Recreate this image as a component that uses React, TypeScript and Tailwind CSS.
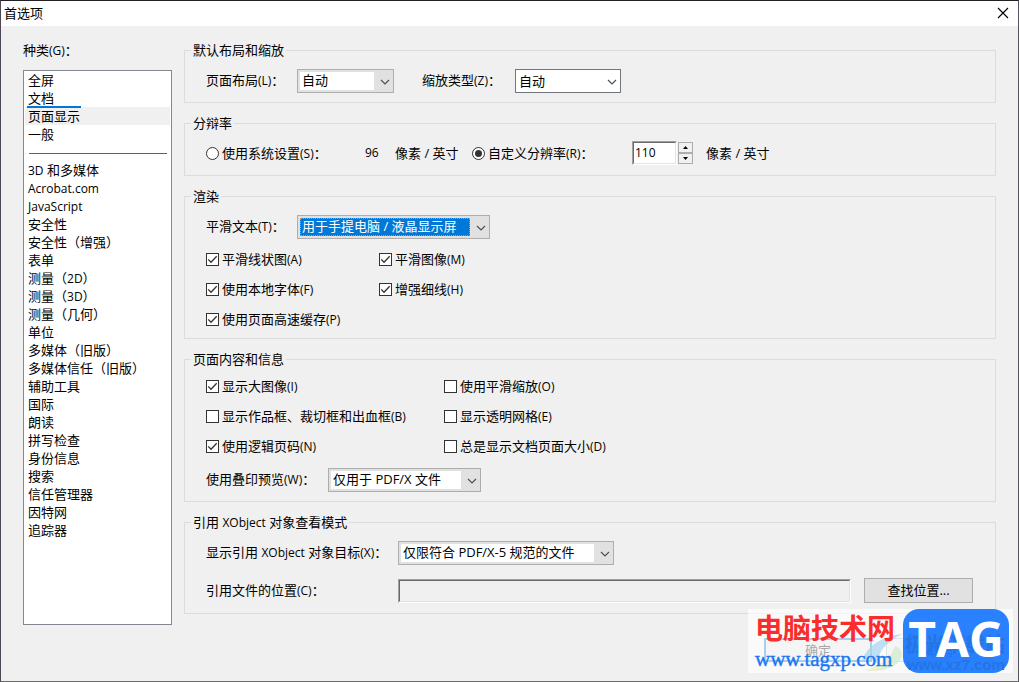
import { useState } from 'react';
import type { ReactNode } from 'react';

const categories = ['全屏', '文档', '页面显示', '一般'];

const moreCategories = [
  '3D 和多媒体',
  'Acrobat.com',
  'JavaScript',
  '安全性',
  '安全性（增强）',
  '表单',
  '测量（2D）',
  '测量（3D）',
  '测量（几何）',
  '单位',
  '多媒体（旧版）',
  '多媒体信任（旧版）',
  '辅助工具',
  '国际',
  '朗读',
  '拼写检查',
  '身份信息',
  '搜索',
  '信任管理器',
  '因特网',
  '追踪器',
];

// Latin runs are set one size smaller than the Chinese text around them
function Label({ text }: { text: string }) {
  return (
    <>
      {text.split(/([\x21-\x7e]+)/).map((part, i) =>
        i % 2 ? (
          <span key={i} className="text-[12px]">
            {part}
          </span>
        ) : (
          part
        )
      )}
    </>
  );
}

function Group({ title, className, children }: { title: string; className: string; children: ReactNode }) {
  return (
    <fieldset className={`min-w-0 border border-[#dcdcdc] pl-[21px] pr-[22px] ${className}`}>
      <legend className="-ml-[15px] h-[18px] px-[2px]">
        <Label text={title} />
      </legend>
      {children}
    </fieldset>
  );
}

function Chevron() {
  return (
    <svg
      className="pointer-events-none absolute right-[3px] top-[9px]"
      width="10"
      height="7"
      viewBox="0 0 10 7"
      fill="none"
      stroke="#505050"
      strokeWidth="1.2"
    >
      <path d="M1 1l4 4 4-4" />
    </svg>
  );
}

function Combo({ id, value, className, selected }: { id: string; value: string; className: string; selected?: boolean }) {
  return (
    <div className={`relative h-6 shrink-0 border border-[#adadad] bg-[#e1e1e1] p-[2px] ${className}`}>
      <select
        id={id}
        className={`block h-[18px] w-full appearance-none rounded-none border-0 border-r-[17px] border-[#e1e1e1] pb-[2px] pl-[2px] leading-[16px] outline-none ${
          selected ? 'bg-[#0078d7] text-white' : 'bg-white'
        }`}
      >
        <option>{value}</option>
      </select>
      {selected && (
        <span className="pointer-events-none absolute bottom-[2px] left-[2px] right-[19px] top-[2px] border border-dotted border-[#ff8728]" />
      )}
      <Chevron />
    </div>
  );
}

function Check({ text, defaultChecked }: { text: string; defaultChecked?: boolean }) {
  return (
    <label className="flex h-[30px] items-center gap-[3px]">
      <span className="grid h-[13px] w-[13px] shrink-0">
        <input
          type="checkbox"
          defaultChecked={defaultChecked}
          className="peer col-start-1 row-start-1 h-[13px] w-[13px] appearance-none border border-[#333333] bg-white"
        />
        <svg
          className="pointer-events-none invisible col-start-1 row-start-1 peer-checked:visible"
          width="13"
          height="13"
          viewBox="0 0 13 13"
          fill="none"
          stroke="#333333"
          strokeWidth="1.3"
        >
          <path d="M2.2 6.4l2.8 2.8 5.7-5.9" />
        </svg>
      </span>
      <span>
        <Label text={text} />
      </span>
    </label>
  );
}

function Radio({ text, checked, onChange, className }: { text: string; checked: boolean; onChange: () => void; className: string }) {
  return (
    <label className={`flex shrink-0 items-center gap-[3px] ${className}`}>
      <span className="grid h-[13px] w-[13px] shrink-0 place-items-center">
        <input
          type="radio"
          name="resolution"
          checked={checked}
          onChange={onChange}
          className="peer col-start-1 row-start-1 h-[13px] w-[13px] appearance-none rounded-full border border-[#333333] bg-white"
        />
        <span className="pointer-events-none invisible col-start-1 row-start-1 h-[7px] w-[7px] rounded-full bg-[#333333] peer-checked:visible" />
      </span>
      <span>
        <Label text={text} />
      </span>
    </label>
  );
}

function Watermark() {
  return (
    <div className="pointer-events-none absolute bottom-[8px] right-[5px] flex h-16 w-[265px] bg-white/65">
      <svg className="absolute left-[112px] top-[24px]" width="50" height="40" viewBox="0 0 50 40">
        <path d="M2 27C8 12 22 3 43 1C29 7 20 15 17 30C11 25 7 25 2 27Z" fill="#a5d4ee" opacity="0.7" />
        <path d="M17 32C26 29 32 22 35 13C46 16 43 31 29 35C22 38 12 39 6 37C10 36 14 35 17 32Z" fill="#cfeacb" opacity="0.7" />
        <path d="M6 37C15 36 24 31 30 24C27 34 18 39 6 37Z" fill="#f2f2c4" />
      </svg>
      <div className="relative flex flex-col pl-[7px]">
        <span className="whitespace-nowrap font-['Noto_Sans_CJK_SC',sans-serif] text-[28px] font-bold leading-[36px] text-[#fb2c2c]">
          电脑技术网
        </span>
        <span className="font-['Liberation_Serif',serif] text-[21px] leading-[28px] text-[#1b76f2] [-webkit-text-stroke:0.4px_#1b76f2]">
          www.tagxp.com
        </span>
      </div>
      <div className="absolute right-[4px] top-0 h-16 w-[106px] rounded-[16px] bg-[#056bff]/85">
        <span className="absolute left-[2px] top-[24px] whitespace-nowrap text-[20px] font-bold leading-[24px] text-[#2474e3]">
          极光下载站
        </span>
        <span className="absolute left-[4px] top-[48px] font-['Liberation_Sans',sans-serif] text-[15px] font-bold leading-[16px] text-[#2474e3]">
          www.xz7.com
        </span>
        <span className="absolute inset-0 text-center font-['Liberation_Sans_Narrow','Open_Sans',sans-serif] text-[48px] font-bold leading-[60px] text-white">
          TAG
        </span>
      </div>
    </div>
  );
}

export default function App() {
  const [current, setCurrent] = useState('页面显示');
  const [custom, setCustom] = useState(true);
  const [dpi, setDpi] = useState(110);

  const renderItem = (name: string) => (
    <li key={name} role="option" aria-selected={current === name} className="relative h-[18px]">
      <button
        type="button"
        onClick={() => setCurrent(name)}
        className={`block h-[18px] w-full whitespace-nowrap pl-[3px] text-left leading-[17px] ${
          current === name ? 'bg-[#f0f0f0]' : ''
        }`}
      >
        <Label text={name} />
      </button>
      {name === '文档' && <span className="absolute -bottom-px left-[2px] z-10 h-[2px] w-[54px] bg-[#0078d7]" />}
    </li>
  );

  return (
    <div className="relative flex min-h-screen flex-col border border-b-[#6b6b6b] border-l-[#4d4653] border-r-[#55555f] border-t-[#222026] bg-[#f0f0f0] font-['Open_Sans','Noto_Sans_CJK_SC',sans-serif] text-[13px] leading-[18px] text-black">
      <header className="flex h-[25px] items-center justify-between bg-white pb-[2px] pl-[3px] pr-[9px]">
        <h1>首选项</h1>
        <button type="button" aria-label="关闭">
          <svg width="12" height="12" viewBox="0 0 12 12" stroke="#000" strokeWidth="1.1">
            <path d="M1 1l10 10M11 1L1 11" />
          </svg>
        </button>
      </header>

      <main className="flex gap-3 pl-[22px] pr-[22px] pt-[15px]">
        <div className="w-[149px] shrink-0">
          <div id="kinds">
            <Label text="种类(G)：" />
          </div>
          <ul
            role="listbox"
            aria-labelledby="kinds"
            className="mt-[10px] h-[555px] border border-[#828790] bg-white px-px"
          >
            {categories.map(renderItem)}
            <li role="separator" className="flex h-[18px] items-center pl-1 pr-[3px] pt-[2px]">
              <span className="h-px w-full bg-[#0078d7]" />
            </li>
            {moreCategories.map(renderItem)}
          </ul>
        </div>

        <form className="flex min-w-0 flex-1 flex-col gap-[11px]" onSubmit={(e) => e.preventDefault()}>
          <Group title="默认布局和缩放" className="pb-[9px] pt-[10px]">
            <div className="flex items-center">
              <label htmlFor="layout" className="w-[91px] pb-[2px]">
                <Label text="页面布局(L)：" />
              </label>
              <Combo id="layout" value="自动" className="w-[97px]" />
              <label htmlFor="zoom" className="ml-7 w-[93px] pb-[2px]">
                <Label text="缩放类型(Z)：" />
              </label>
              <div className="relative h-6 w-[106px] border border-[#707679] bg-white">
                <select id="zoom" className="block h-[22px] w-full appearance-none pl-[3px] leading-[22px] outline-none">
                  <option>自动</option>
                </select>
                <Chevron />
              </div>
            </div>
          </Group>

          <Group title="分辩率" className="pb-[10px] pt-[9px]">
            <div className="flex h-6 items-center">
              <Radio
                text="使用系统设置(S)："
                checked={!custom}
                onChange={() => setCustom(false)}
                className="w-[159px]"
              />
              <span className="w-[30px] text-[12px]">96</span>
              <span className="w-[77px]">像素 / 英寸</span>
              <Radio
                text="自定义分辨率(R)："
                checked={custom}
                onChange={() => setCustom(true)}
                className="w-[160px]"
              />
              <div className="h-6 w-[45px] border border-b-white border-l-[#a0a0a0] border-r-white border-t-[#a0a0a0]">
                <input
                  type="text"
                  aria-label="自定义分辨率"
                  value={dpi}
                  onChange={(e) => setDpi(Number(e.target.value) || 0)}
                  className="block h-full w-full border border-b-[#e3e3e3] border-l-[#696969] border-r-[#e3e3e3] border-t-[#696969] bg-white pb-[2px] pl-[1px] text-[12px] outline-none"
                />
              </div>
              <div className="ml-px flex h-[22px] w-[15px] flex-col">
                <button
                  type="button"
                  aria-label="增加"
                  onClick={() => setDpi(dpi + 1)}
                  className="flex flex-1 items-center justify-center border border-[#adadad]"
                >
                  <svg width="5" height="3" viewBox="0 0 5 3">
                    <path d="M0 3h5L2.5 0z" />
                  </svg>
                </button>
                <button
                  type="button"
                  aria-label="减少"
                  onClick={() => setDpi(dpi - 1)}
                  className="flex flex-1 items-center justify-center border border-[#adadad]"
                >
                  <svg width="5" height="3" viewBox="0 0 5 3">
                    <path d="M0 0h5L2.5 3z" />
                  </svg>
                </button>
              </div>
              <span className="ml-[13px]">像素 / 英寸</span>
            </div>
          </Group>

          <Group title="渲染" className="pb-1 pt-[10px]">
            <div className="flex items-center">
              <label htmlFor="smooth" className="w-[91px] pb-[2px]">
                <Label text="平滑文本(T)：" />
              </label>
              <Combo id="smooth" value="用于手提电脑 / 液晶显示屏" className="w-[193px]" selected />
            </div>
            <div className="mt-[5px] grid grid-cols-[173px_1fr]">
              <Check text="平滑线状图(A)" defaultChecked />
              <Check text="平滑图像(M)" defaultChecked />
              <Check text="使用本地字体(F)" defaultChecked />
              <Check text="增强细线(H)" defaultChecked />
              <Check text="使用页面高速缓存(P)" defaultChecked />
            </div>
          </Group>

          <Group title="页面内容和信息" className="pb-[9px] pt-[3px]">
            <div className="grid grid-cols-[238px_1fr]">
              <Check text="显示大图像(I)" defaultChecked />
              <Check text="使用平滑缩放(O)" />
              <Check text="显示作品框、裁切框和出血框(B)" />
              <Check text="显示透明网格(E)" />
              <Check text="使用逻辑页码(N)" defaultChecked />
              <Check text="总是显示文档页面大小(D)" />
            </div>
            <div className="mt-[7px] flex items-center">
              <label htmlFor="overprint" className="w-[122px] pb-[2px]">
                <Label text="使用叠印预览(W)：" />
              </label>
              <Combo id="overprint" value="仅用于 PDF/X 文件" className="w-[153px]" />
            </div>
          </Group>

          <Group title="引用 XObject 对象查看模式" className="pb-[10px] pt-[10px]">
            <div className="flex items-center">
              <label htmlFor="target" className="w-[192px] pb-[2px]">
                <Label text="显示引用 XObject 对象目标(X)：" />
              </label>
              <Combo id="target" value="仅限符合 PDF/X-5 规范的文件" className="w-[216px]" />
            </div>
            <div className="mt-[13px] flex items-center">
              <label htmlFor="location" className="w-[192px] shrink-0">
                <Label text="引用文件的位置(C)：" />
              </label>
              <div className="h-6 min-w-0 flex-1 border border-b-white border-l-[#a0a0a0] border-r-white border-t-[#a0a0a0]">
                <input
                  id="location"
                  type="text"
                  readOnly
                  className="block h-full w-full border border-b-[#e3e3e3] border-l-[#696969] border-r-[#e3e3e3] border-t-[#696969] bg-[#f0f0f0] outline-none"
                />
              </div>
              <button type="button" className="ml-[13px] h-[25px] w-[109px] border border-[#adadad] bg-[#e1e1e1] pb-[2px]">
                查找位置...
              </button>
            </div>
          </Group>
        </form>
      </main>

      <footer className="flex justify-end gap-[14px] pb-[18px] pr-6 pt-[13px]">
        <button type="button" className="h-6 w-[108px] border-2 border-[#0078d7] bg-[#e1e1e1]">
          确定
        </button>
        <button type="button" className="h-6 w-[108px] border border-[#adadad] bg-[#e1e1e1]">
          取消
        </button>
      </footer>

      <Watermark />
    </div>
  );
}
